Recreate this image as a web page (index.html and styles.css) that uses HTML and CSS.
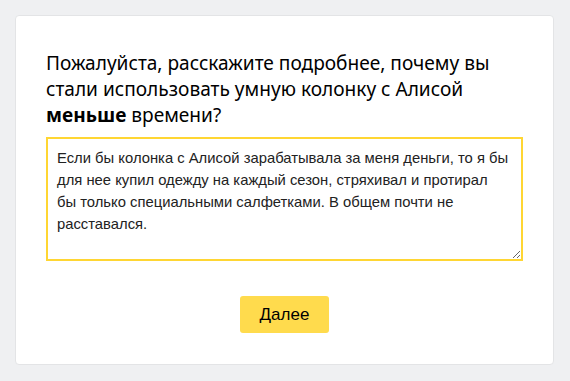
FILE: index.html
```html
<!DOCTYPE html>
<html lang="ru">
<head>
<meta charset="utf-8">
<link rel="stylesheet" href="styles.css">
</head>
<body>
<div class="card">
  <h1 class="question">Пожалуйста, расскажите подробнее, почему вы стали использовать умную колонку с Алисой <b>меньше</b> времени?</h1>
  <textarea class="answer">Если бы колонка с Алисой зарабатывала за меня деньги, то я бы
для нее купил одежду на каждый сезон, стряхивал и протирал
бы только специальными салфетками. В общем почти не
расставался.</textarea>
  <div class="actions"><button class="next">Далее</button></div>
</div>
</body>
</html>
```
FILE: styles.css
```css
html, body { margin: 0; padding: 0; }
body {
  background: #eff0f2;
  padding: 15px 16px 16px 15px;
  width: 570px;
  height: 381px;
  box-sizing: border-box;
}
.card {
  background: #fff;
  border: 1px solid #e3e4e6;
  border-radius: 4px;
  box-sizing: border-box;
  height: 350px;
  padding: 34px 30px 0 30px;
}
.question {
  margin: 0;
  font-family: "Noto Sans", sans-serif;
  font-weight: 400;
  font-size: 19.1px;
  line-height: 26px;
  color: #000;
}
.question b { font-weight: 700; }
.answer {
  display: block;
  margin: 9px 0 0 0;
  width: 100%;
  height: 124px;
  box-sizing: border-box;
  border: 2px solid #ffd633;
  border-radius: 0;
  padding: 8px 2px 8px 9px;
  font-family: "Liberation Sans", Arial, sans-serif;
  font-size: 14.8px;
  line-height: 22px;
  color: #222;
  outline: none;
  resize: vertical;
}
.actions {
  display: flex;
  justify-content: center;
  margin-top: 35px;
}
.next {
  width: 89px;
  height: 37px;
  background: #ffdb4d;
  border: none;
  border-radius: 3px;
  font-family: "Liberation Sans", Arial, sans-serif;
  font-size: 17px;
  color: #000;
  padding: 0;
}
```
